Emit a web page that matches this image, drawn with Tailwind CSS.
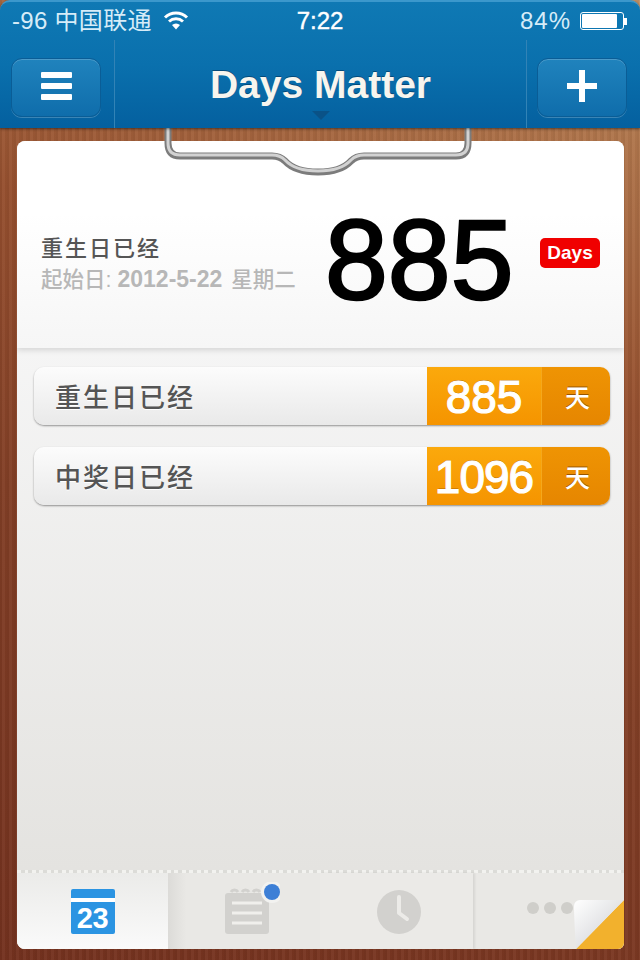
<!DOCTYPE html>
<html lang="en">
  <head>
    <meta charset="UTF-8" />
    <meta name="viewport" content="width=device-width, initial-scale=1.0" />
    <title>Days Matter</title>
    <script src="https://cdn.jsdelivr.net/npm/@tailwindcss/browser@4"></script>
  </head>
  <body class="bg-black">
    <div class="relative w-[640px] h-[960px] overflow-hidden flex flex-col font-['Liberation_Sans','Noto_Sans_CJK_SC',sans-serif] bg-[repeating-linear-gradient(90deg,rgba(0,0,0,0.05)_0,rgba(0,0,0,0.05)_2px,rgba(255,255,255,0.03)_2px,rgba(255,255,255,0.03)_5px,rgba(0,0,0,0.03)_5px,rgba(0,0,0,0.03)_7px),linear-gradient(200deg,#c49468_0%,#b0764c_12%,#96502f_35%,#823f26_60%,#74321f_100%)]">
      <!-- header -->
      <header class="relative z-20 h-[128px] shrink-0 rounded-t-[10px] border-t-2 border-[#3b98cc] bg-[linear-gradient(180deg,#0f79b4_0%,#0a70ad_50%,#04609f_100%)] shadow-[0_1px_3px_rgba(0,0,0,0.5)]">
        <div class="grid grid-cols-3 h-[38px] items-center pl-[12px] pr-[12px] text-[24px] leading-none text-[#d6ecf8]">
          <div class="flex items-center gap-[11px]">
            <span class="whitespace-nowrap tracking-[0.3px]">-96 中国联通</span>
            <svg class="w-[26px] h-[20px] shrink-0 -mt-[2px]" viewBox="0 0 26 20">
              <path d="M2 7.500a16 16 0 0 1 22 0M6 11.500a10.500 10.500 0 0 1 14 0" fill="none" stroke="#fff" stroke-width="3" />
              <path d="M9 15a6 6 0 0 1 8 0l-4 4.500z" fill="#fff" />
            </svg>
          </div>
          <div class="text-center text-white font-medium [-webkit-text-stroke:0.4px_white]">7:22</div>
          <div class="flex items-center justify-end gap-[9px] pr-[1px]">
            <span class="tracking-[1px]">84%</span>
            <div class="flex items-center">
              <div class="w-[44px] h-[18px] rounded-[3px] border border-white p-[1px]">
                <div class="w-[35px] h-full bg-white rounded-[1px]"></div>
              </div>
              <div class="w-[3px] h-[7px] bg-white"></div>
            </div>
          </div>
        </div>
        <div class="flex h-[88px]">
          <div class="w-[115px] shrink-0 border-r border-[#3283b6] pt-[18px] pl-[11px]">
            <button class="flex items-center justify-center w-[90px] h-[59px] rounded-[11px] border border-[#0a5d96] bg-[linear-gradient(180deg,#2083bd_0%,#0f6dab_100%)] shadow-[inset_0_1px_0_rgba(255,255,255,0.2),0_1px_0_rgba(255,255,255,0.22)]">
              <span class="flex flex-col gap-[5px] -mt-[3px]">
                <span class="block w-[31px] h-[6px] rounded-[1px] bg-white"></span>
                <span class="block w-[31px] h-[6px] rounded-[1px] bg-white"></span>
                <span class="block w-[31px] h-[6px] rounded-[1px] bg-white"></span>
              </span>
            </button>
          </div>
          <div class="relative flex-1 text-center pt-[23px] text-[39px] leading-[44px] font-bold text-[#f7f5ee] [text-shadow:0_-1px_0_rgba(0,50,90,0.6)]">
            Days Matter
            <div class="absolute left-1/2 -translate-x-1/2 bottom-[8px] w-0 h-0 border-x-[9px] border-x-transparent border-t-[9px] border-t-[#0a5287]"></div>
          </div>
          <div class="w-[114px] shrink-0 border-l border-[#3283b6] pt-[18px] pl-[10px]">
            <button class="flex items-center justify-center w-[90px] h-[59px] rounded-[11px] border border-[#0a5d96] bg-[linear-gradient(180deg,#2083bd_0%,#0f6dab_100%)] shadow-[inset_0_1px_0_rgba(255,255,255,0.2),0_1px_0_rgba(255,255,255,0.22)]">
              <svg class="w-[30px] h-[32px] -mt-[3px]" viewBox="0 0 30 32"><path d="M12 0h6v13h12v6H18v13h-6V19H0v-6h12z" fill="#fff" /></svg>
            </button>
          </div>
        </div>
      </header>

      <!-- clipboard -->
      <div class="flex-1 min-h-0 pl-[17px] pr-[16px] pt-[13px] pb-[11px]">
        <main class="flex flex-col h-full rounded-t-[8px] rounded-bl-[8px] rounded-br-[6px] overflow-hidden bg-[#e8e7e4]">
          <section class="relative z-10 h-[207px] shrink-0 flex items-center pl-[24px] pt-[20px] bg-[linear-gradient(180deg,#ffffff_0%,#ffffff_35%,#f6f6f6_100%)] shadow-[0_2px_6px_rgba(0,0,0,0.14)]">
            <div class="w-[284px] shrink-0 mt-[20px]">
              <div class="text-[22px] leading-[31px] tracking-[2px] font-medium text-[#555]">重生日已经</div>
              <div class="flex items-baseline text-[21.5px] leading-[31px] font-medium text-[#b7b7b7] whitespace-nowrap"><span>起始日:</span><span class="text-[23px] font-bold ml-[6px]">2012-5-22</span><span class="ml-[9px]">星期二</span></div>
            </div>
            <div class="w-[215px] shrink-0 text-[113px] leading-none text-black mt-[12px] [-webkit-text-stroke:2.5px_black]">885</div>
            <div class="flex items-center justify-center w-[60px] h-[30px] rounded-[5px] bg-[#f00000] text-white text-[19px] leading-none font-bold -mt-[4px]">Days</div>
          </section>

          <section class="flex-1 min-h-0 flex flex-col gap-[22px] pl-[17px] pr-[14px] pt-[19px] bg-[linear-gradient(180deg,#f5f5f5_0%,#e4e3e0_100%)]">
            <div class="flex h-[58px] rounded-[10px] overflow-hidden shadow-[0_1px_2px_rgba(0,0,0,0.4)]">
              <div class="w-[393px] flex items-center pl-[21px] pt-[4px] text-[26px] tracking-[2px] font-medium text-[#555] bg-[linear-gradient(180deg,#fcfcfc_0%,#e9e9e9_100%)] [text-shadow:0_1px_0_#fff]">重生日已经</div>
              <div class="w-[115px] flex items-center justify-center pt-[2px] text-[46px] text-white border-r border-[#f5a81c] bg-[linear-gradient(180deg,#fba90c_0%,#f59400_100%)] [-webkit-text-stroke:1.2px_white] [text-shadow:0_-1px_0_rgba(150,80,0,0.7)]">885</div>
              <div class="flex-1 flex items-center justify-center pt-[5px] pl-[3px] text-[25px] font-medium text-white bg-[linear-gradient(180deg,#ef9403_0%,#e68600_100%)] [text-shadow:0_-1px_0_rgba(130,70,0,0.8)]">天</div>
            </div>
            <div class="flex h-[58px] rounded-[10px] overflow-hidden shadow-[0_1px_2px_rgba(0,0,0,0.4)]">
              <div class="w-[393px] flex items-center pl-[21px] pt-[4px] text-[26px] tracking-[2px] font-medium text-[#555] bg-[linear-gradient(180deg,#fcfcfc_0%,#e9e9e9_100%)] [text-shadow:0_1px_0_#fff]">中奖日已经</div>
              <div class="w-[115px] flex items-center justify-center pt-[2px] text-[46px] tracking-[-1px] text-white border-r border-[#f5a81c] bg-[linear-gradient(180deg,#fba90c_0%,#f59400_100%)] [-webkit-text-stroke:1.2px_white] [text-shadow:0_-1px_0_rgba(150,80,0,0.7)]">1096</div>
              <div class="flex-1 flex items-center justify-center pt-[5px] pl-[3px] text-[25px] font-medium text-white bg-[linear-gradient(180deg,#ef9403_0%,#e68600_100%)] [text-shadow:0_-1px_0_rgba(130,70,0,0.8)]">天</div>
            </div>
          </section>

          <!-- stitching -->
          <div class="h-[3px] shrink-0 bg-[repeating-linear-gradient(90deg,#f2f2ef_0,#f2f2ef_4px,#dcdcd8_4px,#dcdcd8_7.500px)]"></div>

          <nav class="relative h-[76px] shrink-0 flex bg-[#e9e8e5]">
            <div class="w-[151px] flex items-center justify-center bg-[linear-gradient(180deg,#ebebe9_0%,#fafafa_100%)]">
              <div class="w-[44px] h-[45px] rounded-[2px] bg-[#2b94e2]">
                <div class="h-[9px] rounded-t-[2px]"></div>
                <div class="h-[4px] bg-white"></div>
                <div class="text-center text-white text-[29px] leading-[33px] font-bold tracking-[-0.5px]">23</div>
              </div>
            </div>
            <div class="w-[152px] flex items-center justify-center bg-[linear-gradient(90deg,#dcdbd8_0%,#e9e8e5_12%)]">
              <svg class="w-[56px] h-[54px] ml-[16px] -mt-[4px]" viewBox="0 0 56 54">
                <rect x="1" y="11" width="44" height="41" rx="3" fill="#d2d1ce" />
                <path d="M7 10a4 4 0 0 1 7 0M18 10a4 4 0 0 1 7 0M29 10a4 4 0 0 1 7 0" fill="none" stroke="#d2d1ce" stroke-width="3" />
                <path d="M8 21h30M8 31h30M8 41h30" stroke="#f0efec" stroke-width="3" />
                <circle cx="48" cy="10" r="11" fill="#f2f2f0" />
                <circle cx="48" cy="10" r="8" fill="#3d7fd6" />
              </svg>
            </div>
            <div class="w-[153px] flex items-center justify-center pl-[5px] bg-[#ebeae7] shadow-[2px_0_2px_rgba(0,0,0,0.08)]">
              <svg class="w-[46px] h-[46px] mt-[1px]" viewBox="0 0 46 46">
                <circle cx="23" cy="23" r="22" fill="#d2d1ce" />
                <path d="M23 8v16l8 6" fill="none" stroke="#ecebe8" stroke-width="4" stroke-linecap="round" stroke-linejoin="round" />
              </svg>
            </div>
            <div class="flex-1 flex items-start pt-[29px] pl-[54px] gap-[5px]">
              <span class="block w-[12px] h-[12px] rounded-full bg-[#cfceca]"></span>
              <span class="block w-[12px] h-[12px] rounded-full bg-[#cfceca]"></span>
              <span class="block w-[12px] h-[12px] rounded-full bg-[#cfceca]"></span>
            </div>
            <!-- page curl -->
            <svg class="absolute right-0 bottom-0 w-[50px] h-[49px]" viewBox="0 0 50 49">
              <defs>
                <linearGradient id="curl" x1="0" y1="0" x2="1" y2="1">
                  <stop offset="0" stop-color="#ffffff" />
                  <stop offset="0.6" stop-color="#dfe0e2" />
                </linearGradient>
              </defs>
              <path d="M50 0 2 49h48z" fill="#f2b12d" />
              <path d="M6 0h44L2 49C1 32 0 16 0 6a6 6 0 0 1 6-6z" fill="url(#curl)" />
            </svg>
          </nav>
        </main>
      </div>

      <!-- clip -->
      <svg class="absolute z-10 left-[160px] top-[128px] w-[316px] h-[52px]" viewBox="0 0 316 52">
        <path d="M8 0v15q0 13 12 13h92q8 0 13 5 10 11 33 11t33-11q5-5 13-5h92q12 0 12-13V0" fill="none" stroke="#7c7c7c" stroke-width="7" />
        <path d="M8 0v15q0 12 12 12h92q8 0 13 5 10 11 33 11t33-11q5-5 13-5h92q12 0 12-12V0" fill="none" stroke="#d2d2d2" stroke-width="3" />
      </svg>
    </div>
  </body>
</html>
